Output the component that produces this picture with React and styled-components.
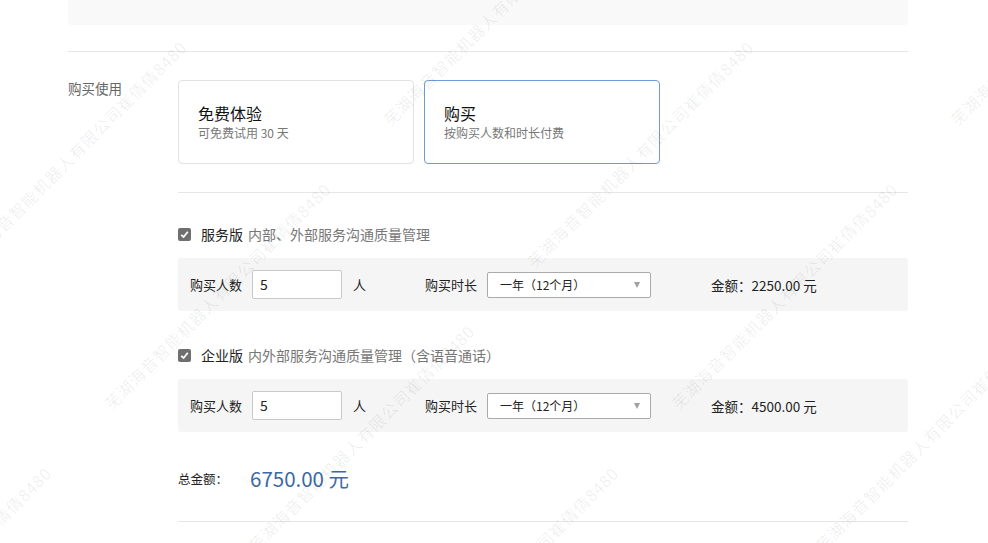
import React from "react"
import styled, { createGlobalStyle } from "styled-components"

const GlobalStyle = createGlobalStyle`
  html, body {
    margin: 0;
    padding: 0;
    background: #fff;
  }
  body {
    font-family: "Noto Sans CJK SC", "Noto Sans", sans-serif;
    color: #333;
  }
`

const Page = styled.div`
  position: relative;
  width: 988px;
  height: 543px;
  overflow: hidden;
  padding: 0 80px 0 68px;
  box-sizing: border-box;
`

const TopBox = styled.div`
  height: 25px;
  background: #f9f9f9;
  border-radius: 0 0 4px 4px;
`

const Divider = styled.div`
  height: 1px;
  background: #e6e6e6;
  margin-top: ${props => props.$top}px;
`

const Section = styled.div`
  display: grid;
  grid-template-columns: 110px 1fr;
  padding-top: 28px;
`

const SideLabel = styled.div`
  font-size: 13.5px;
  line-height: 20px;
  margin-top: -2px;
  color: #666;
`

const Cards = styled.div`
  display: flex;
  gap: 10px;
`

const Card = styled.div`
  width: 236px;
  height: 84px;
  box-sizing: border-box;
  border: 1px solid ${props => (props.$active ? "#6e9bd1" : "#e2e2e2")};
  border-radius: 4px;
  padding: 0 19px;
  display: flex;
  flex-direction: column;
  justify-content: center;
`

const CardTitle = styled.div`
  font-size: 16px;
  line-height: 20px;
  color: #111;
`

const CardSub = styled.div`
  font-size: 12px;
  line-height: 18px;
  margin-top: 1px;
  color: #777;
`

const PlanHeader = styled.div`
  display: flex;
  align-items: center;
  height: 20px;
  margin-top: ${props => props.$top}px;
`

const Check = styled.span`
  width: 13px;
  height: 13px;
  border-radius: 2px;
  background: #6f6f6f;
  display: inline-flex;
  align-items: center;
  justify-content: center;
  margin-right: 10px;
`

const PlanName = styled.span`
  font-size: 14px;
  color: #222;
  margin-right: 5px;
`

const PlanDesc = styled.span`
  font-size: 14px;
  color: #777;
`

const PlanRow = styled.div`
  display: grid;
  grid-template-columns: 235px 286px 1fr;
  align-items: center;
  height: 53px;
  margin-top: 14px;
  padding-left: 12px;
  background: #f5f5f5;
  border-radius: 3px;
  font-size: 13px;
  color: #222;
`

const Group = styled.div`
  display: flex;
  align-items: center;
`

const NumInput = styled.div`
  width: 90px;
  height: 29px;
  box-sizing: border-box;
  margin-left: 10px;
  border: 1px solid #c9c9c9;
  border-radius: 2px;
  background: #fff;
  font-size: 14px;
  line-height: 27px;
  padding-left: 7px;
  color: #222;
`

const Unit = styled.span`
  margin-left: 11px;
`

const Select = styled.div`
  width: 164px;
  height: 26px;
  box-sizing: border-box;
  margin-left: 10px;
  border: 1px solid #aaa;
  border-radius: 2px;
  background: #fff;
  display: flex;
  align-items: center;
  justify-content: space-between;
  padding: 0 10px 0 12px;
  font-size: 12px;
  color: #222;
`

const Arrow = styled.span`
  width: 0;
  height: 0;
  border-left: 3.5px solid transparent;
  border-right: 3.5px solid transparent;
  border-top: 6px solid #a0a0a0;
`

const Amount = styled(Group)`
  font-size: 13.5px;
`

const Total = styled.div`
  display: flex;
  align-items: center;
  height: 28px;
  margin-top: 32px;
`

const TotalLabel = styled.span`
  width: 72px;
  font-size: 12.5px;
  color: #222;
`

const TotalValue = styled.span`
  font-size: 20.5px;
  color: #3b6aa6;
`

const Watermark = styled.div`
  position: absolute;
  inset: 0;
  pointer-events: none;
`

const Mark = styled.span`
  position: absolute;
  transform: translate(-50%, -50%) rotate(-45deg);
  white-space: nowrap;
  font-size: 16px;
  letter-spacing: 1px;
  color: rgba(0, 0, 0, 0.07);
`

const plans = [
  { id: 1, name: "服务版", desc: "内部、外部服务沟通质量管理", amount: "2250.00", top: 31 },
  { id: 2, name: "企业版", desc: "内外部服务沟通质量管理（含语音通话）", amount: "4500.00", top: 34 },
]

const marks = []
for (let i = -2; i <= 2; i++) {
  for (let j = -2; j <= 5; j++) {
    const x = 73 + 567 * i + 144 * j
    const y = 154 + 142 * j
    if (x > -170 && x < 1150 && y > -150 && y < 700) marks.push({ x, y, key: `${i}_${j}` })
  }
}

const CheckIcon = () => (
  <svg width="9" height="9" viewBox="0 0 9 9">
    <path d="M1.2 4.8 L3.6 7 L7.8 1.8" fill="none" stroke="#fff" strokeWidth="1.8" />
  </svg>
)

const App = () => {
  return (
    <Page>
      <GlobalStyle />
      <TopBox />
      <Divider $top={26} />
      <Section>
        <SideLabel>购买使用</SideLabel>
        <div>
          <Cards>
            <Card>
              <CardTitle>免费体验</CardTitle>
              <CardSub>可免费试用 30 天</CardSub>
            </Card>
            <Card $active>
              <CardTitle>购买</CardTitle>
              <CardSub>按购买人数和时长付费</CardSub>
            </Card>
          </Cards>
          <Divider $top={28} />
          {plans.map(plan => (
            <div key={plan.id}>
              <PlanHeader $top={plan.top}>
                <Check><CheckIcon /></Check>
                <PlanName>{plan.name}</PlanName>
                <PlanDesc>{plan.desc}</PlanDesc>
              </PlanHeader>
              <PlanRow>
                <Group>
                  购买人数
                  <NumInput>5</NumInput>
                  <Unit>人</Unit>
                </Group>
                <Group>
                  购买时长
                  <Select>
                    一年（12个月）
                    <Arrow />
                  </Select>
                </Group>
                <Amount>金额：{plan.amount} 元</Amount>
              </PlanRow>
            </div>
          ))}
          <Total>
            <TotalLabel>总金额：</TotalLabel>
            <TotalValue>6750.00 元</TotalValue>
          </Total>
          <Divider $top={29} />
        </div>
      </Section>
      <Watermark>
        {marks.map(m => (
          <Mark key={m.key} style={{ left: m.x, top: m.y }}>芜湖海音智能机器人有限公司崔倩倩8480</Mark>
        ))}
      </Watermark>
    </Page>
  )
}

export default App
